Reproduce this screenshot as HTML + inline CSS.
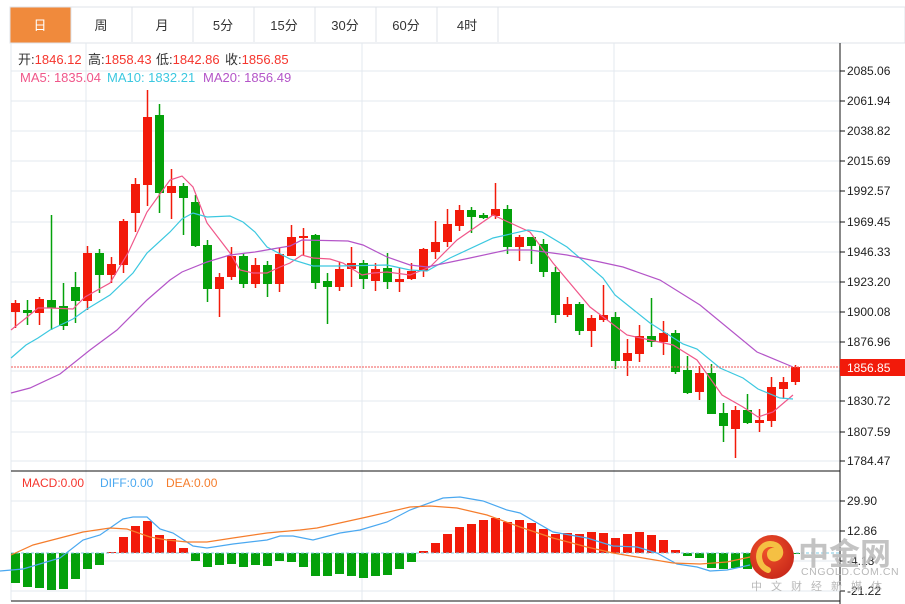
<!DOCTYPE html>
<html><head><meta charset="utf-8">
<style>
body{margin:0;width:905px;height:604px;background:#fff;overflow:hidden;font-family:"Liberation Sans","Noto Sans CJK SC",sans-serif;}
svg{position:absolute;left:0;top:0}
</style></head><body>
<svg id="s" width="905" height="604" xmlns="http://www.w3.org/2000/svg" font-family="Liberation Sans, Noto Sans CJK SC, sans-serif">
<rect x="10" y="7" width="895" height="36" fill="#fff" stroke="#dfe3e8"/>
<rect x="10.5" y="7.5" width="60" height="35" fill="#f08a3c"/>
<g stroke="#dfe3e8"><line x1="71" y1="7" x2="71" y2="42"/><line x1="132" y1="7" x2="132" y2="42"/><line x1="193" y1="7" x2="193" y2="42"/><line x1="254" y1="7" x2="254" y2="42"/><line x1="315" y1="7" x2="315" y2="42"/><line x1="376" y1="7" x2="376" y2="42"/><line x1="437" y1="7" x2="437" y2="42"/><line x1="498" y1="7" x2="498" y2="42"/></g>
<g font-size="13" text-anchor="middle" fill="#333">
<text x="40" y="30" fill="#fff">日</text><text x="101" y="30">周</text><text x="162" y="30">月</text><text x="223" y="30">5分</text><text x="284" y="30">15分</text><text x="345" y="30">30分</text><text x="406" y="30">60分</text><text x="467" y="30">4时</text></g>
<g stroke="#e3e9ef" stroke-width="1" id="grid">
<line x1="11" y1="43" x2="11" y2="601"/>
<line x1="86" y1="43" x2="86" y2="601"/><line x1="362" y1="43" x2="362" y2="601"/><line x1="614" y1="43" x2="614" y2="601"/>
<line x1="11" y1="71" x2="840" y2="71"/><line x1="11" y1="101" x2="840" y2="101"/><line x1="11" y1="131" x2="840" y2="131"/><line x1="11" y1="161" x2="840" y2="161"/><line x1="11" y1="191" x2="840" y2="191"/><line x1="11" y1="222" x2="840" y2="222"/><line x1="11" y1="252" x2="840" y2="252"/><line x1="11" y1="282" x2="840" y2="282"/><line x1="11" y1="312" x2="840" y2="312"/><line x1="11" y1="342" x2="840" y2="342"/><line x1="11" y1="371" x2="840" y2="371"/><line x1="11" y1="401" x2="840" y2="401"/><line x1="11" y1="432" x2="840" y2="432"/><line x1="11" y1="461" x2="840" y2="461"/>
<line x1="11" y1="501" x2="840" y2="501"/><line x1="11" y1="531" x2="840" y2="531"/><line x1="11" y1="561" x2="840" y2="561"/><line x1="11" y1="591" x2="840" y2="591"/>
</g>
<line x1="11" y1="471" x2="840" y2="471" stroke="#111"/>
<line x1="11" y1="601" x2="840" y2="601" stroke="#111"/>
<line x1="840" y1="43" x2="840" y2="604" stroke="#111"/>
<g id="c"></g>
<g font-size="13">
<text x="18" y="64" fill="#333">开:<tspan fill="#f5352d">1846.12</tspan></text>
<text x="88" y="64" fill="#333">高:<tspan fill="#f5352d">1858.43</tspan></text>
<text x="156" y="64" fill="#333">低:<tspan fill="#f5352d">1842.86</tspan></text>
<text x="225" y="64" fill="#333">收:<tspan fill="#f5352d">1856.85</tspan></text>
<text x="20" y="82" fill="#f0578a">MA5: 1835.04</text>
<text x="107" y="82" fill="#3cc8e0">MA10: 1832.21</text>
<text x="203" y="82" fill="#b455c8">MA20: 1856.49</text>
<text x="22" y="487" fill="#f5352d" font-size="12">MACD:0.00</text>
<text x="100" y="487" fill="#4aa8f0" font-size="12">DIFF:0.00</text>
<text x="166" y="487" fill="#f57d2c" font-size="12">DEA:0.00</text>
</g>
<g font-size="12" fill="#222" id="ax"></g>
<line x1="11" y1="367" x2="840" y2="367" stroke="#f05a5a" stroke-dasharray="2,1"/>
<rect x="840" y="359" width="65" height="17" fill="#f21a0a"/>
<text x="847" y="372" font-size="12" fill="#fff">1856.85</text>
<defs><radialGradient id="lg" cx="0.4" cy="0.35" r="0.7"><stop offset="0" stop-color="#f0522a"/><stop offset="1" stop-color="#c8281a"/></radialGradient></defs>
<circle cx="772" cy="557" r="22" fill="url(#lg)"/>
<path d="M768 570 C758 566 756 552 764 546 C771 541 782 546 780 554 C778 560 770 560 770 554 C770 550 775 550 775 553" fill="none" stroke="#f5c043" stroke-width="6" stroke-linecap="round"/>
<text x="798" y="565" font-size="31" fill="#bdbdbd" fill-opacity="0.9" font-family="Noto Sans CJK SC, sans-serif" font-weight="bold">中金网</text>
<text x="801" y="575" font-size="10.5" fill="#b8b8b8" letter-spacing="0.6">CNGOLD.COM.CN</text>
<text x="751" y="590" font-size="11" fill="#b8b8b8" letter-spacing="9" font-family="Noto Sans CJK SC, sans-serif">中文财经新媒体</text>
</svg>
<script>
var NS="http://www.w3.org/2000/svg",g=document.getElementById('c');
function el(t,a){var e=document.createElementNS(NS,t);for(var k in a)e.setAttribute(k,a[k]);g.appendChild(e);return e;}
var R="#f21a0a",G="#04a10a";
var C=[
['r',303,312,300,328],['g',310,313,300,325],['r',299,313,297,325],['g',300,308,215,330],['g',306,326,283,330],['g',287,301,272,323],['r',253,301,246,310],['g',253,275,249,293],['r',264,275,257,283],['r',221,265,219,273],
['r',184,213,178,232],['r',117,185,90,206],['g',115,193,104,213],['r',186,193,169,219],['g',186,198,183,235],['g',202,246,195,247],['g',245,289,240,302],['r',277,289,273,317],['r',256,277,247,280],['g',256,284,253,288],
['r',265,284,258,288],['g',265,284,261,297],['r',254,284,248,292],['r',237,256,225,256],['r',236,238,228,255],['g',235,283,234,289],['g',281,287,273,324],['r',269,287,262,291],['r',263,269,247,287],['g',263,279,260,289],
['r',269,281,263,291],['g',268,282,253,289],['r',279,282,268,292],['r',271,279,263,280],['r',249,271,248,277],['r',242,252,221,259],['r',224,242,209,247],['r',210,226,205,231],['g',210,217,207,233],['g',215,218,213,219],
['r',209,216,183,219],['g',209,247,205,254],['r',237,247,235,261],['g',237,246,237,264],['g',244,272,239,277],['g',272,315,267,323],['r',304,315,297,317],['g',304,331,302,335],['r',318,331,315,347],['r',315,320,285,322],
['g',317,361,312,369],['r',353,361,339,376],['r',336,354,325,362],['g',336,342,298,347],['r',333,342,321,355],['g',333,372,330,374],['g',370,393,356,394],['r',373,392,366,400],['g',373,414,364,414],['g',413,426,403,442],
['r',410,429,406,458],['g',410,423,394,424],['r',420,423,409,432],['r',387,421,377,427],['r',382,389,377,399],['r',367,382,365,385]];
var M=[583,587,588,590,589,579,569,565,552,537,526,521,535,539,548,561,567,565,564,567,565,566,561,562,567,576,576,574,576,578,576,575,569,562,551,543,534,527,524,520,518,522,520,523,529,534,533,534,532,533,538,534,532,535,540,550,556,558,568,569,568,569,565,560,556,554];
for(var i=0;i<66;i++){var x=15+12*i;var v=M[i];
 el('rect',{x:x-4,y:Math.min(v,553),width:9,height:Math.max(1,Math.abs(v-553)),fill:v<553?R:G});}
el('line',{x1:11,y1:553,x2:840,y2:553,stroke:'#7cc8e0','stroke-dasharray':'3,2'});
function pl(p,c){el('polyline',{points:p,fill:'none',stroke:c,'stroke-width':1.2});}
pl("0,571 23,569 60,558 83,540 100,535 123,519 133,517 147,517 160,529 173,533 193,546 207,548 233,544 267,540 280,536 293,536 313,540 340,533 360,530 387,522 410,510 443,498 460,497 483,501 507,510 520,513 553,532 587,538 613,546 637,547 657,553 677,564 697,567 710,571 727,570 750,565","#4aa8f0");
pl("11,555 33,545 83,532 110,528 127,529 150,537 167,540 187,542 207,542 233,538 267,533 300,530 317,528 367,517 410,507 430,506 457,508 487,515 520,527 553,538 587,547 613,553 643,558 673,563 700,564 727,562 750,557","#f57d2c");
for(var i=0;i<66;i++){var x=15+12*i,d=C[i],c=d[0]=='r'?R:G;
 el('line',{x1:x+0.5,y1:d[3],x2:x+0.5,y2:d[4],stroke:c,'stroke-width':1.5});
 el('rect',{x:x-4,y:d[1],width:9,height:Math.max(2,d[2]-d[1]),fill:c});}
pl("11,330 26,318 38,308 50,308 73,309 85,297 110,283 128,253 147,212 170,180 182,176 193,187 207,223 230,253 240,270 253,273 267,273 280,267 290,263 302,255 313,258 330,259 343,263 362,275 373,273 387,272 410,275 430,267 457,240 493,215 530,232 553,263 590,307 627,335 650,340 673,345 697,360 722,395 743,407 758,417 773,412 793,395","#f0578a");
pl("11,358 26,345 38,338 50,330 73,319 87,309 110,295 133,273 147,253 170,232 182,219 193,213 207,217 230,216 243,222 255,232 267,247 290,259 313,266 337,266 387,265 410,270 427,271 450,258 493,238 528,230 542,232 567,247 603,278 615,295 650,323 683,344 697,349 720,368 743,378 758,389 780,398 793,399","#3cc8e0");
pl("11,393 30,388 60,374 90,350 117,330 147,300 170,280 182,272 207,262 230,255 255,252 278,248 290,246 302,240 348,241 363,245 387,257 410,265 427,267 470,258 507,250 530,250 567,255 600,262 623,267 660,280 700,305 757,352 793,367","#b455c8");
var ax=document.getElementById('ax');
var L=[[71,'2085.06'],[101,'2061.94'],[131,'2038.82'],[161,'2015.69'],[191,'1992.57'],[222,'1969.45'],[252,'1946.33'],[282,'1923.20'],[312,'1900.08'],[342,'1876.96'],[401,'1830.72'],[432,'1807.59'],[461,'1784.47'],[501,'29.90'],[531,'12.86'],[561,'-4.18'],[591,'-21.22']];
L.forEach(function(l){var t=document.createElementNS(NS,'text');t.setAttribute('x',847);t.setAttribute('y',l[0]+4);t.textContent=l[1];ax.appendChild(t);
var k=document.createElementNS(NS,'line');k.setAttribute('x1',840);k.setAttribute('x2',845);k.setAttribute('y1',l[0]);k.setAttribute('y2',l[0]);k.setAttribute('stroke','#111');ax.appendChild(k);});
</script>
</body></html>
